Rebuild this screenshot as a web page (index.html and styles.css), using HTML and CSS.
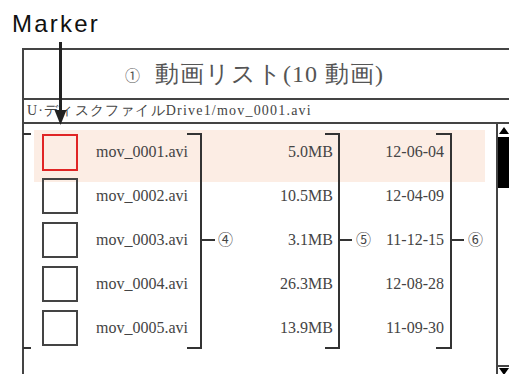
FILE: index.html
```html
<!DOCTYPE html>
<html lang="ja">
<head>
<meta charset="UTF-8" />
<meta name="viewport" content="width=device-width, initial-scale=1" />
<title>動画リスト</title>
<link rel="stylesheet" href="styles.css">
</head>
<body>

<div class="marker-label">Marker</div>

<div class="frame">
  <div class="title"><span class="num">①</span>動画リスト(10 動画)</div>
  <div class="path">U·ディスクファイルDrive1/mov_0001.avi</div>

  <div class="list">
    <div class="rows">
      <div class="row selected">
        <span class="check"></span>
        <span class="name">mov_0001.avi</span>
        <span class="size">5.0MB</span>
        <span class="date">12-06-04</span>
      </div>
      <div class="row">
        <span class="check"></span>
        <span class="name">mov_0002.avi</span>
        <span class="size">10.5MB</span>
        <span class="date">12-04-09</span>
      </div>
      <div class="row">
        <span class="check"></span>
        <span class="name">mov_0003.avi</span>
        <span class="size">3.1MB</span>
        <span class="date">11-12-15</span>
      </div>
      <div class="row">
        <span class="check"></span>
        <span class="name">mov_0004.avi</span>
        <span class="size">26.3MB</span>
        <span class="date">12-08-28</span>
      </div>
      <div class="row">
        <span class="check"></span>
        <span class="name">mov_0005.avi</span>
        <span class="size">13.9MB</span>
        <span class="date">11-09-30</span>
      </div>
    </div>

    <div class="scrollbar">
      <span class="arrow-up"></span>
      <span class="thumb"></span>
      <span class="track"></span>
      <div class="scroll-end"><span class="arrow-down"></span></div>
    </div>
  </div>
</div>

<!-- Beschriftung: Pfeil und Klammern liegen über der Liste -->
<svg class="notes" width="509" height="374" viewBox="0 0 509 374">
  <g stroke="#222" stroke-width="3" fill="#222">
    <line x1="60.5" y1="42" x2="60.5" y2="112" />
    <polygon points="54.5,110 66.5,110 60.5,125" stroke="none" />
  </g>
  <g stroke="#333" stroke-width="2" fill="none">
    <path d="M23 134 H31 M23 348 H31" />
    <path d="M187 134 H201 V348 H187 M201 240 H215" />
    <path d="M325 134 H339 V348 H325 M339 240 H352" />
    <path d="M436 134 H451 V348 H436 M451 240 H464" />
  </g>
  <g class="callout">
    <text x="218" y="245">④</text>
    <text x="356" y="245">⑤</text>
    <text x="468" y="245">⑥</text>
  </g>
</svg>

</body>
</html>
```

FILE: styles.css
```css
:root {
  --line: #444;
  --text: #444;
  --hl: #fcede4;
  --mark: #e02525;
  --serif: "Liberation Serif", "Times New Roman", "DejaVu Serif", Times, serif;
}
body {
  margin: 0;
  width: 509px;
  height: 374px;
  overflow: hidden;
  position: relative;
  background: #fff;
  color: var(--text);
}
.marker-label {
  font-family: "Liberation Sans", Arial, sans-serif;
  font-size: 24px;
  line-height: 28px;
  letter-spacing: 2.2px;
  color: #111;
  padding: 10px 0 0 12px;
  box-sizing: border-box;
  height: 48px;
}
.frame {
  margin-left: 22px;
  width: 487px;
  border-left: 2px solid var(--line);
  border-top: 2px solid var(--line);
  box-sizing: border-box;
}
.title {
  height: 48px;
  border-bottom: 2px solid var(--line);
  display: flex;
  align-items: center;
  justify-content: center;
  padding-right: 24px;
  font-family: var(--serif);
  font-size: 24px;
  letter-spacing: 1px;
  color: #555;
}
.title .num {
  font-family: "Noto Sans CJK JP", sans-serif;
  font-size: 15px;
  margin-right: 14px;
}
.path {
  height: 22px;
  line-height: 22px;
  border-bottom: 2px solid var(--line);
  padding-left: 3px;
  font-family: var(--serif);
  font-size: 14px;
  letter-spacing: 1.2px;
  color: #444;
}
.list {
  display: flex;
  height: 250px;
}
.rows {
  flex: 1;
  padding: 6px 0 0 10px;
}
.row {
  width: 451px;
  height: 44px;
  display: grid;
  grid-template-columns: 36px 122px 133px 111px;
  align-items: center;
  padding-left: 8px;
  box-sizing: border-box;
  font-family: var(--serif);
  font-size: 16px;
}
.row.selected {
  background: var(--hl);
  box-shadow: 0 8px 0 var(--hl);
}
.check {
  width: 36px;
  height: 36px;
  border: 2px solid var(--line);
  box-sizing: border-box;
}
.row.selected .check {
  border-color: var(--mark);
  height: 37px;
}
.name {
  padding-left: 18px;
}
.size, .date {
  text-align: right;
}
.scrollbar {
  width: 13px;
  border-left: 2px solid var(--line);
  box-sizing: border-box;
  display: flex;
  flex-direction: column;
  align-items: center;
}
.arrow-up {
  width: 0;
  height: 0;
  border-left: 5px solid transparent;
  border-right: 5px solid transparent;
  border-bottom: 7px solid #000;
  margin: 3px 0;
}
.thumb {
  align-self: stretch;
  height: 51px;
  background: #000;
}
.track {
  flex: 1;
}
.scroll-end {
  align-self: stretch;
  height: 9px;
  border-top: 2px solid var(--line);
  padding-top: 1px;
  box-sizing: border-box;
  display: flex;
  justify-content: center;
}
.arrow-down {
  width: 0;
  height: 0;
  border-left: 5px solid transparent;
  border-right: 5px solid transparent;
  border-top: 7px solid #000;
}
.notes {
  position: absolute;
  left: 0;
  top: 0;
  pointer-events: none;
}
.callout text {
  font-family: "Noto Sans CJK JP", sans-serif;
  font-size: 15px;
  fill: #444;
}
```
